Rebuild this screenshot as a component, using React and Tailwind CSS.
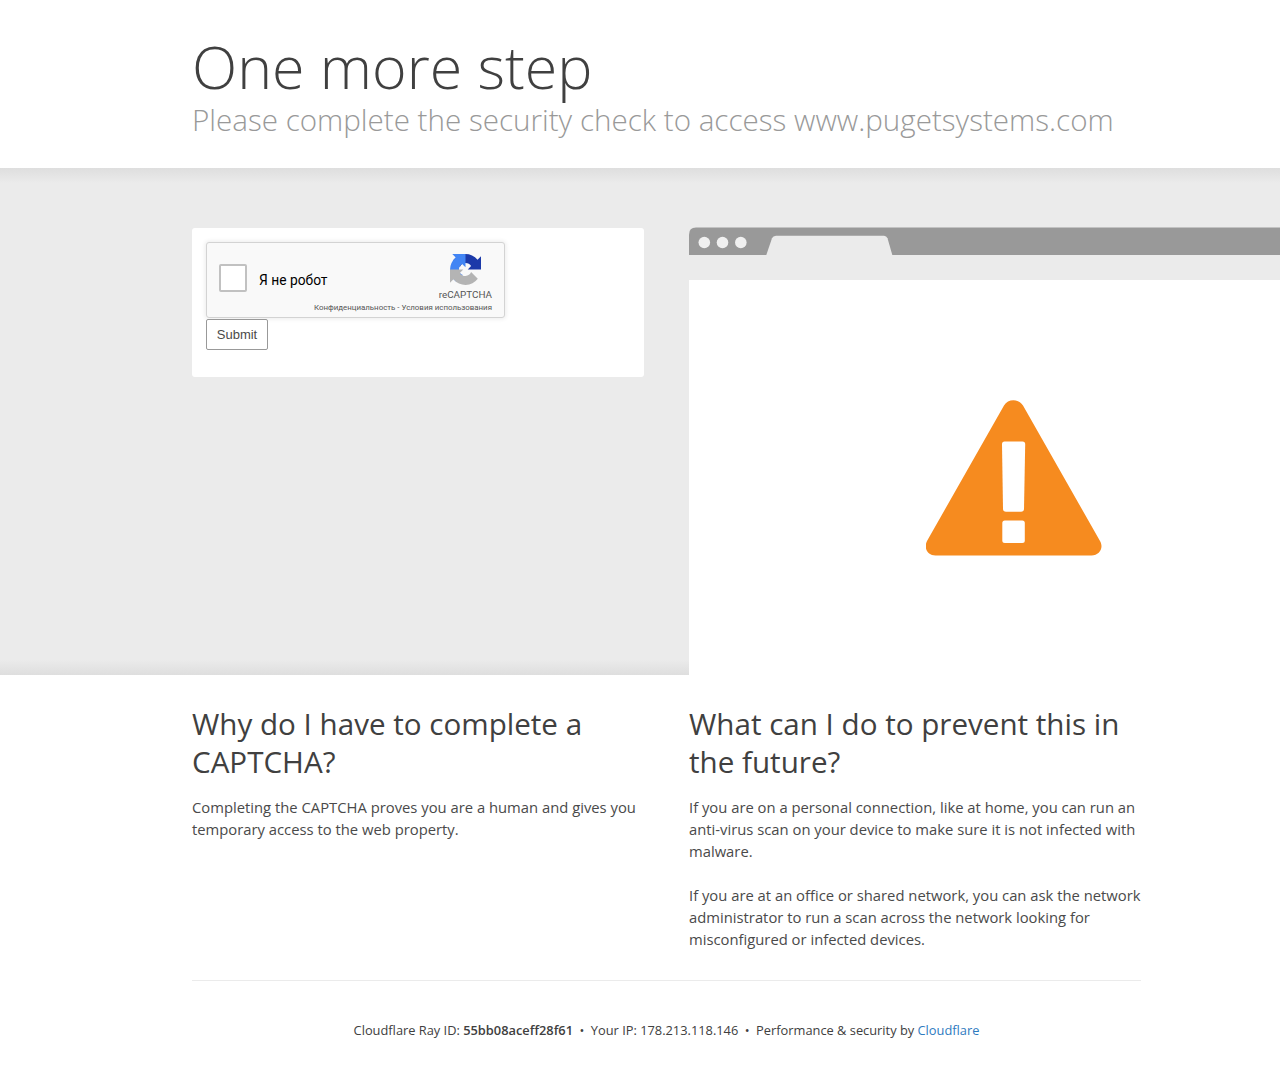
import React from "react";

const RecaptchaLogo = () => (
  <svg viewBox="0 0 64 64" className="h-[31px] w-[31px]">
    <path
      fill="#1c3aa9"
      d="M64 32V4.700L56.800 11.850A32 32 0 0 0 6.600 12.700L20.500 26.600A13 13 0 0 1 32 18.500Q40 18.500 43.500 25L36.700 32Z"
    />
    <path
      fill="#4285f4"
      d="M32 0H4.700L11.850 7.200A32 32 0 0 0 12.700 57.400L26.600 43.500A13 13 0 0 1 18.500 32Q18.500 24 25 20.500L32 27.300Z"
    />
    <path
      fill="#b4b4b4"
      d="M0 32V59.300L7.200 52.150A32 32 0 0 0 57.400 51.300L43.500 37.400A13 13 0 0 1 32 45.500Q24 45.500 20.500 39L27.300 32Z"
    />
  </svg>
);

const WarningIcon = () => (
  <svg viewBox="0 0 176 156" className="h-[156px] w-[176px]">
    <path
      fill="#f68b1f"
      d="M78 5.500C82-1.500 92.500-1.500 97 5.500L174 141C178 148 173.500 155.500 165.500 155.500H9.500C1.500 155.500-2.500 148 1 141Z"
    />
    <path
      fill="#fff"
      d="M78.500 41.500H96.500Q99.200 41.500 99.200 44L98 109Q97.800 111.700 95 111.700H80Q77.200 111.700 77 109L76 44Q76 41.500 78.500 41.500Z"
    />
    <rect x="76.300" y="120.500" width="22.500" height="22.500" rx="2.500" fill="#fff" />
  </svg>
);

const Captcha = () => (
  <div className="flex h-[76px] w-[299px] justify-between rounded-[3px] border border-[#d3d3d3] bg-[#f9f9f9] pl-3 font-['Roboto',sans-serif] shadow-[0_0_4px_1px_rgba(0,0,0,0.08)]">
    <div className="flex w-[94px] items-center gap-3 pb-1">
      <span className="h-7 w-7 shrink-0 rounded-[2px] border-2 border-[#c1c1c1] bg-white" />
      <span className="pt-1 text-[13.8px] whitespace-nowrap text-black">Я не робот</span>
    </div>
    <div className="flex flex-col items-end pt-[11px] pr-3 text-[#555]">
      <div className="pr-[11px]">
        <RecaptchaLogo />
      </div>
      <span className="mt-1 text-[9.9px] leading-3">reCAPTCHA</span>
      <span className="mt-0.5 text-[7.9px] leading-[10px] whitespace-nowrap">
        Конфиденциальность - Условия использования
      </span>
    </div>
  </div>
);

const BrowserWindow = () => (
  <div className="flex w-[650px] shrink-0 flex-col">
    <svg viewBox="0 0 650 28" className="h-7 w-[650px]">
      <path fill="#999" d="M0 28V7.500Q0 .5 7 .5H650V28Z" />
      <path fill="#ebebeb" d="M77.300 28L83 11.300Q84 8.800 87 8.800H195Q197.500 8.800 198.500 11.300L203.300 28Z" />
      <circle cx="15.300" cy="15.500" r="5.800" fill="#f0f0f0" />
      <circle cx="33.500" cy="15.500" r="5.800" fill="#f0f0f0" />
      <circle cx="51.800" cy="15.500" r="5.800" fill="#f0f0f0" />
    </svg>
    <div className="mt-[25px] flex flex-1 justify-center bg-white pt-[120px]">
      <WarningIcon />
    </div>
  </div>
);

const Question = ({ title, children }) => (
  <div className="w-[452px]">
    <h2 className="text-[29.6px] leading-[38px]">{title}</h2>
    <div className="mt-[14.5px] flex flex-col gap-[22px] text-[14.8px] leading-[22.1px] text-[#4a4a4a]">
      {children}
    </div>
  </div>
);

const App = () => (
  <div className="min-h-[1089px] w-full overflow-hidden bg-white font-['Open_Sans',sans-serif] text-[#404040]">
    <header className="h-[168px] pt-[31px] pl-48">
      <h1 className="text-[59.1px] leading-[71px] font-light">One more step</h1>
      <h2 className="text-[29.6px] leading-[36px] font-light whitespace-nowrap text-[#999]">
        Please complete the security check to access www.pugetsystems.com
      </h2>
    </header>

    <section className="flex h-[507px] items-stretch gap-[45px] overflow-hidden bg-[linear-gradient(to_bottom,#dedede,#ebebeb_3%,#ebebeb_97%,#dedede)] pt-[59px] pl-48">
      <div className="mt-px h-[149px] w-[452px] shrink-0 rounded-[3px] bg-white px-[14px] pt-[14px]">
        <Captcha />
        <button className="mt-px h-[31px] w-[62px] rounded-[2px] border border-[#999] bg-white font-['Liberation_Sans',sans-serif] text-[13px] text-[#4a4a4a]">
          Submit
        </button>
      </div>
      <BrowserWindow />
    </section>

    <section className="flex gap-[45px] pt-[30px] pl-48">
      <Question title="Why do I have to complete a CAPTCHA?">
        <p>Completing the CAPTCHA proves you are a human and gives you temporary access to the web property.</p>
      </Question>
      <Question title="What can I do to prevent this in the future?">
        <p>
          If you are on a personal connection, like at home, you can run an anti-virus scan on your device to make
          sure it is not infected with malware.
        </p>
        <p>
          If you are at an office or shared network, you can ask the network administrator to run a scan across the
          network looking for misconfigured or infected devices.
        </p>
      </Question>
    </section>

    <footer className="mt-[30px] ml-48 flex w-[949px] justify-center gap-[6.5px] border-t border-[#ebebeb] pt-[39px] text-[12.83px] leading-5">
      <span>
        Cloudflare Ray ID: <strong className="font-semibold">55bb08aceff28f61</strong>
      </span>
      <span>•</span>
      <span>Your IP: 178.213.118.146</span>
      <span>•</span>
      <span>
        Performance &amp; security by <a className="text-[#2f7bbf]">Cloudflare</a>
      </span>
    </footer>
  </div>
);

export default App;
